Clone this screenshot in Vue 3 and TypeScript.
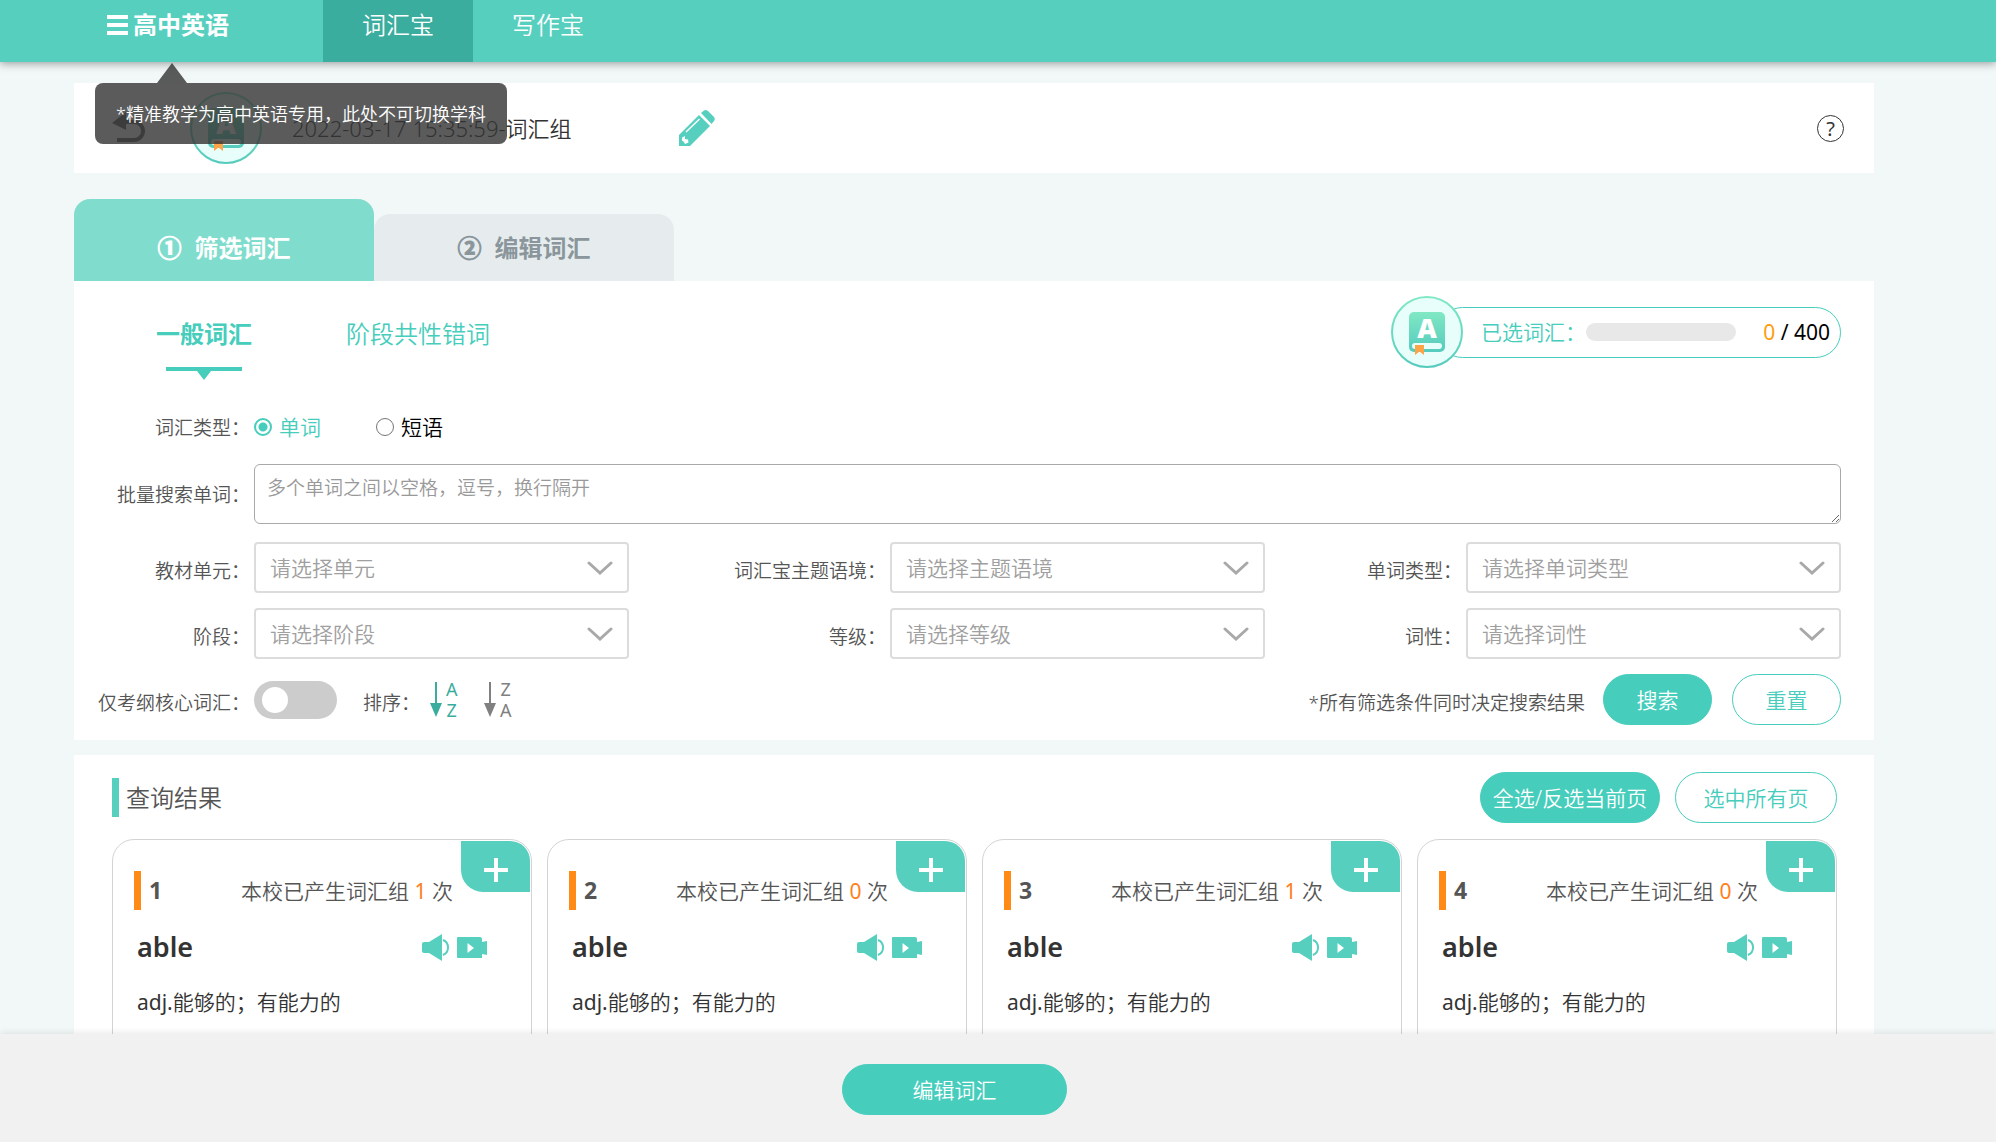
<script setup lang="ts">
import { ref } from 'vue'

interface FilterField {
  id: string
  label: string
  placeholder: string
}

interface WordCard {
  index: number
  used: number
  word: string
  pos: string
  meaning: string
}

const wordKind = ref('word')
const batch = ref('')
const coreOnly = ref(false)
const selected = ref(0)
const limit = 400

const filterRows: FilterField[][] = [
  [
    { id: 'unit', label: '教材单元：', placeholder: '请选择单元' },
    { id: 'theme', label: '词汇宝主题语境：', placeholder: '请选择主题语境' },
    { id: 'kind', label: '单词类型：', placeholder: '请选择单词类型' },
  ],
  [
    { id: 'stage', label: '阶段：', placeholder: '请选择阶段' },
    { id: 'level', label: '等级：', placeholder: '请选择等级' },
    { id: 'pos', label: '词性：', placeholder: '请选择词性' },
  ],
]

const cards: WordCard[] = [
  { index: 1, used: 1, word: 'able', pos: 'adj.', meaning: '能够的；有能力的' },
  { index: 2, used: 0, word: 'able', pos: 'adj.', meaning: '能够的；有能力的' },
  { index: 3, used: 1, word: 'able', pos: 'adj.', meaning: '能够的；有能力的' },
  { index: 4, used: 0, word: 'able', pos: 'adj.', meaning: '能够的；有能力的' },
]
</script>

<template>
  <div class="page">
    <header class="topbar">
      <button class="subject" type="button">
        <svg class="burger" viewBox="0 0 21 20" aria-hidden="true">
          <path d="M0 0h21v4H0zM0 8h21v4H0zM0 16h21v4H0z" fill="#fff" />
        </svg>
        高中英语
      </button>
      <nav class="nav">
        <a class="nav-link active" href="#words">词汇宝</a>
        <a class="nav-link" href="#writing">写作宝</a>
      </nav>
      <div class="tip" role="tooltip">*精准教学为高中英语专用，此处不可切换学科</div>
    </header>

    <main class="content">
      <section class="titlebar">
        <button class="icon-btn" type="button" aria-label="返回">
          <svg class="back" viewBox="0 0 34 32" aria-hidden="true">
            <path d="M0 11L14 0v18z" fill="#666" />
            <path d="M12 10h10a9 9 0 0 1 0 18H5" fill="none" stroke="#666" stroke-width="4" />
          </svg>
        </button>
        <svg class="badge" viewBox="0 0 72 72" aria-hidden="true">
          <defs>
            <linearGradient id="ring1" x1="0" y1="0" x2="0" y2="1">
              <stop offset="0" stop-color="#80e8c4" /><stop offset="1" stop-color="#55cbbd" />
            </linearGradient>
          </defs>
          <circle cx="36" cy="36" r="35" fill="#e8fefa" stroke="url(#ring1)" stroke-width="2" />
          <rect x="18" y="16" width="36" height="40" rx="5" fill="url(#ring1)" />
          <text x="36" y="42" class="badge-letter">A</text>
          <rect x="21" y="47" width="30" height="6" rx="3" fill="#e8fefa" />
          <path d="M24 49h9v10l-4.500-3.500L24 59z" fill="#ffa347" />
        </svg>
        <h1 class="group-name">2022-03-17 15:35:59-词汇组</h1>
        <button class="icon-btn" type="button" aria-label="重命名">
          <svg class="pencil" viewBox="0 0 36 36" aria-hidden="true">
            <path d="M0 25L20 5l11 11L11 36H0z" fill="#57cfbf" />
            <path d="M22 3l3-2.500q2-1 4 .5l6 6q1.500 2 0 4L32.500 14z" fill="#57cfbf" />
            <path d="M7 22L20.500 9" stroke="#fff" stroke-width="1.500" />
            <path d="M3 27.500l3-1.500v3l3 .5.500 3-3.500 1.500q-1-3-3-3.500z" fill="#fff" />
          </svg>
        </button>
        <button class="help" type="button" aria-label="帮助">?</button>
      </section>

      <div class="steps" role="tablist">
        <button class="step active" type="button" role="tab" aria-selected="true"><span>①</span>筛选词汇</button>
        <button class="step" type="button" role="tab" aria-selected="false"><span>②</span>编辑词汇</button>
      </div>

      <form class="panel filters" @submit.prevent>
        <div class="subhead">
          <div class="subtabs">
            <button class="subtab active" type="button">一般词汇</button>
            <button class="subtab" type="button">阶段共性错词</button>
          </div>
          <div class="counter">
            <svg class="badge" viewBox="0 0 72 72" aria-hidden="true">
              <circle cx="36" cy="36" r="35" fill="#e8fefa" stroke="url(#ring1)" stroke-width="2" />
              <rect x="18" y="16" width="36" height="40" rx="5" fill="url(#ring1)" />
              <text x="36" y="42" class="badge-letter">A</text>
              <rect x="21" y="47" width="30" height="6" rx="3" fill="#e8fefa" />
              <path d="M24 49h9v10l-4.500-3.500L24 59z" fill="#ffa347" />
            </svg>
            <div class="pill">
              <span class="pill-label">已选词汇：</span>
              <span class="track"><span class="fill" :style="{ width: (selected / limit) * 100 + '%' }"></span></span>
              <span class="amount"><b>{{ selected }}</b> / {{ limit }}</span>
            </div>
          </div>
        </div>

        <div class="line kind-line">
          <span class="label">词汇类型：</span>
          <label class="radio"><input v-model="wordKind" type="radio" name="kind" value="word" /><span>单词</span></label>
          <label class="radio"><input v-model="wordKind" type="radio" name="kind" value="phrase" /><span>短语</span></label>
        </div>

        <div class="line batch-line">
          <label class="label" for="batch">批量搜索单词：</label>
          <textarea id="batch" v-model="batch" placeholder="多个单词之间以空格，逗号，换行隔开"></textarea>
        </div>

        <div v-for="(row, r) in filterRows" :key="r" class="line select-line">
          <div v-for="field in row" :key="field.id" class="field">
            <label class="label" :for="field.id">{{ field.label }}</label>
            <div class="select">
              <select :id="field.id"><option>{{ field.placeholder }}</option></select>
              <svg class="chevron" viewBox="0 0 26 14" aria-hidden="true">
                <path d="M2 2l11 10L24 2" fill="none" stroke="#a9a9a9" stroke-width="3" stroke-linecap="round" />
              </svg>
            </div>
          </div>
        </div>

        <div class="line action-line">
          <label class="label" for="core">仅考纲核心词汇：</label>
          <input id="core" v-model="coreOnly" class="toggle" type="checkbox" />
          <span class="label sort-label">排序：</span>
          <button class="sort active" type="button" aria-label="升序">
            <svg viewBox="0 0 12 35" aria-hidden="true"><path d="M5 0h2v21h5L6 35 0 21h5z" fill="currentColor" /></svg>
            <span>A<br />Z</span>
          </button>
          <button class="sort" type="button" aria-label="降序">
            <svg viewBox="0 0 12 35" aria-hidden="true"><path d="M5 0h2v21h5L6 35 0 21h5z" fill="currentColor" /></svg>
            <span>Z<br />A</span>
          </button>
          <span class="label note">*所有筛选条件同时决定搜索结果</span>
          <button class="btn solid" type="submit">搜索</button>
          <button class="btn" type="reset">重置</button>
        </div>
      </form>

      <section class="panel results">
        <div class="results-head">
          <h2>查询结果</h2>
          <button class="btn solid wide" type="button">全选/反选当前页</button>
          <button class="btn all" type="button">选中所有页</button>
        </div>
        <div class="cards">
          <article v-for="card in cards" :key="card.index" class="card">
            <button class="add" type="button" aria-label="添加">
              <svg viewBox="0 0 24 24" aria-hidden="true"><path d="M12 0v24M0 12h24" stroke="#fff" stroke-width="4" /></svg>
            </button>
            <div class="card-top">
              <span class="num">{{ card.index }}</span>
              <span class="used">本校已产生词汇组 <em>{{ card.used }}</em> 次</span>
            </div>
            <div class="card-word">
              <h3>{{ card.word }}</h3>
              <button class="icon-btn" type="button" aria-label="发音">
                <svg class="speaker" viewBox="0 0 27 27" aria-hidden="true">
                  <path d="M2 8h5L20 0v27L7 19H2q-2 0-2-2v-7q0-2 2-2z" fill="#57cfbf" />
                  <path d="M21 6q5 2 5 7.500T21 21" fill="none" stroke="#57cfbf" stroke-width="2" />
                </svg>
              </button>
              <button class="icon-btn" type="button" aria-label="视频">
                <svg class="video" viewBox="0 0 30 21" aria-hidden="true">
                  <path d="M1 0h22q2 0 2 2v3l5-1v14l-5-1v4H1q-1 0-1-1V1q0-1 1-1z" fill="#57cfbf" />
                  <path d="M10.500 6l6.500 5-6.500 5z" fill="#fff" />
                </svg>
              </button>
            </div>
            <p class="meaning"><span class="pos">{{ card.pos }}</span>{{ card.meaning }}</p>
          </article>
        </div>
      </section>
    </main>

    <footer class="bottombar">
      <button class="btn solid edit" type="button">编辑词汇</button>
    </footer>
  </div>
</template>

<style>
body {
  margin: 0;
  background: #f2f8f8;
}
</style>

<style scoped>
* {
  box-sizing: border-box;
}

.page {
  display: flex;
  flex-direction: column;
  height: 100vh;
  font-family: "Noto Sans", "Noto Sans CJK SC", sans-serif;
  font-size: 21px;
  font-weight: 350;
  line-height: 30px;
  color: #333;
}

button,
select,
textarea {
  margin: 0;
  padding: 0;
  border: 0;
  background: none;
  color: inherit;
  font: inherit;
}

button {
  cursor: pointer;
}

svg {
  display: block;
}

h1,
h2,
h3,
p {
  margin: 0;
  font-weight: inherit;
}

.topbar {
  position: relative;
  z-index: 2;
  display: flex;
  flex: none;
  height: 62px;
  padding-left: 107px;
  background: #57cfbf;
  box-shadow: 0 2px 8px rgba(0, 0, 0, 0.35);
  color: #fff;
  font-size: 24px;
}

.subject {
  display: flex;
  align-items: center;
  gap: 5px;
  width: 216px;
  height: 50px;
  font-weight: 700;
}

.burger {
  width: 21px;
  height: 20px;
}

.nav {
  display: flex;
}

.nav-link {
  width: 150px;
  color: #fff;
  line-height: 50px;
  text-align: center;
  text-decoration: none;
}

.nav-link.active {
  background: #3aad9e;
}

.tip {
  position: absolute;
  top: 83px;
  left: 95px;
  height: 61px;
  padding: 0 21px;
  border-radius: 8px;
  background: rgba(50, 50, 50, 0.8);
  font-size: 18px;
  line-height: 62px;
}

.tip::before {
  content: "";
  position: absolute;
  bottom: 100%;
  left: 62px;
  border: 15px solid transparent;
  border-top: 0;
  border-bottom: 20px solid rgba(50, 50, 50, 0.8);
}

.content {
  flex: 1;
  min-height: 0;
  overflow-y: auto;
  padding: 21px 122px 0 74px;
  scrollbar-width: none;
}

.titlebar {
  display: flex;
  align-items: center;
  height: 90px;
  padding: 0 30px 0 38px;
  background: #fff;
}

.icon-btn {
  flex: none;
}

.back {
  width: 34px;
  height: 32px;
}

.badge {
  flex: none;
  width: 72px;
  height: 72px;
}

.titlebar .badge {
  margin: 0 30px 0 44px;
}

.badge-letter {
  fill: #fff;
  font: 900 27px "Noto Sans", sans-serif;
  text-anchor: middle;
}

.group-name {
  min-width: 387px;
  font-size: 22px;
}

.pencil {
  width: 36px;
  height: 36px;
}

.help {
  width: 27px;
  height: 27px;
  margin-left: auto;
  border: 1px solid #333;
  border-radius: 50%;
  color: #333;
  font-size: 20px;
  font-weight: 400;
  line-height: 25px;
}

.steps {
  display: flex;
  align-items: flex-end;
  margin-top: 26px;
}

.step {
  width: 300px;
  height: 67px;
  border-radius: 16px 16px 0 0;
  background: #e6ecee;
  color: #8a969b;
  font-size: 24px;
  font-weight: 700;
}

.step span {
  margin-right: 13px;
  -webkit-text-stroke: 1px currentColor;
}

.step.active {
  height: 82px;
  padding-top: 16px;
  background: #80ddcd;
  color: #fff;
}

.panel {
  background: #fff;
}

.filters {
  padding: 15px 33px 15px 16px;
}

.subhead {
  display: flex;
  justify-content: space-between;
  height: 84px;
}

.subtabs {
  display: flex;
  gap: 94px;
  padding: 20px 0 0 66px;
}

.subtab {
  display: flex;
  flex-direction: column;
  align-items: center;
  height: 64px;
  color: #46cdbc;
  font-size: 24px;
  line-height: 36px;
}

.subtab.active {
  font-weight: 700;
}

.subtab.active::after {
  content: "";
  width: 76px;
  height: 13px;
  margin-top: 15px;
  background: #46cdbc;
  clip-path: polygon(0 0, 100% 0, 100% 4px, 45px 4px, 38px 13px, 31px 4px, 0 4px);
}

.counter {
  display: flex;
  align-items: center;
  height: 72px;
}

.counter .badge {
  z-index: 1;
  margin-right: -26px;
}

.pill {
  display: flex;
  align-items: center;
  height: 51px;
  padding: 0 10px 0 43px;
  border: 1px solid #46cdbc;
  border-radius: 26px;
  color: #000;
}

.pill-label {
  color: #46cdbc;
}

.track {
  width: 150px;
  height: 18px;
  overflow: hidden;
  border-radius: 9px;
  background: #e8e8e8;
}

.fill {
  display: block;
  height: 100%;
  background: #46cdbc;
}

.amount {
  width: 94px;
  font-weight: 400;
  text-align: right;
}

.amount b {
  color: #ff9c0a;
  font-weight: 400;
}

.line {
  display: flex;
  align-items: center;
}

.label {
  flex: none;
  width: 164px;
  padding: 6px 4px 0 0;
  color: #555;
  font-size: 19px;
  text-align: right;
}

.kind-line {
  height: 30px;
  margin-top: 32px;
}

.kind-line .label,
.batch-line .label {
  padding-top: 2px;
}

.radio {
  display: flex;
  align-items: center;
  gap: 7px;
  width: 122px;
  color: #000;
}

.radio input {
  width: 18px;
  height: 18px;
  margin: 0;
  border: 1px solid #767676;
  border-radius: 50%;
  appearance: none;
}

.radio input:checked {
  border: 2px solid #46cdbc;
  background: radial-gradient(circle, #46cdbc 4px, #fff 5px);
}

.radio input:checked + span {
  color: #46cdbc;
}

.batch-line {
  margin-top: 22px;
}

textarea {
  display: block;
  flex: 1;
  height: 60px;
  padding: 8px 12px;
  border: 1px solid #a9a9a9;
  border-radius: 6px;
  background: #fff;
  font-size: 19px;
}

textarea::placeholder {
  color: #999;
}

.select-line {
  justify-content: space-between;
  margin-top: 15px;
}

.batch-line + .select-line {
  margin-top: 18px;
}

.field {
  display: flex;
  align-items: center;
}

.field:last-child .label {
  width: 104px;
}

.select {
  display: grid;
  width: 375px;
}

.select > * {
  grid-area: 1 / 1;
}

select {
  width: 100%;
  height: 51px;
  padding: 0 14px;
  border: 2px solid #dcdcdc;
  border-radius: 4px;
  background: #fff;
  color: #a0a0a0;
  appearance: none;
}

.chevron {
  width: 26px;
  height: 14px;
  margin-right: 16px;
  place-self: center end;
  pointer-events: none;
}

.action-line {
  height: 51px;
  margin-top: 15px;
}

.toggle {
  display: flex;
  align-items: center;
  width: 83px;
  height: 38px;
  margin: 0;
  padding: 0 8px;
  border-radius: 19px;
  background: #ccc;
  appearance: none;
}

.toggle::before {
  content: "";
  width: 26px;
  height: 26px;
  border-radius: 50%;
  background: #fff;
}

.toggle:checked {
  justify-content: flex-end;
  background: #46cdbc;
}

.sort-label {
  width: 93px;
  padding-left: 26px;
  text-align: left;
}

.sort {
  display: flex;
  align-items: center;
  gap: 4px;
  width: 54px;
  color: #808080;
  font-size: 18px;
  font-weight: 400;
  line-height: 21px;
}

.sort svg {
  width: 12px;
  height: 35px;
}

.sort.active {
  color: #3aad9e;
}

.note {
  width: auto;
  margin: 0 14px 0 auto;
}

.btn {
  width: 109px;
  height: 51px;
  border: 1px solid #46cdbc;
  border-radius: 26px;
  color: #46cdbc;
}

.btn + .btn {
  margin-left: 20px;
}

.btn.solid {
  background: #46cdbc;
  color: #fff;
}

.results {
  margin-top: 15px;
  padding: 17px 37px 40px 38px;
}

.results-head {
  display: flex;
  align-items: center;
}

.results-head h2 {
  margin-right: auto;
  padding-left: 7px;
  border-left: 7px solid #57cfbf;
  color: #555;
  font-size: 24px;
  line-height: 39px;
}

.btn.wide {
  width: 180px;
}

.results-head .all {
  width: 162px;
  margin-left: 15px;
}

.cards {
  display: grid;
  grid-template-columns: repeat(4, 1fr);
  gap: 15px;
  margin-top: 16px;
}

.card {
  position: relative;
  min-height: 300px;
  padding: 31px 21px 20px;
  border: 1px solid #d4d4d4;
  border-radius: 22px;
}

.add {
  position: absolute;
  top: 1px;
  right: 1px;
  display: flex;
  align-items: center;
  justify-content: center;
  width: 69px;
  height: 51px;
  padding-top: 6px;
  border-radius: 0 20px 0 22px;
  background: #57cfbf;
}

.add svg {
  width: 24px;
  height: 24px;
}

.card-top {
  display: flex;
  justify-content: space-between;
  align-items: center;
  padding-right: 57px;
}

.num {
  padding-left: 8px;
  border-left: 7px solid #ff8a15;
  color: #555;
  font-size: 23px;
  font-weight: 700;
  line-height: 39px;
}

.used {
  color: #555;
}

.used em {
  color: #ff7e1c;
  font-style: normal;
  font-weight: 400;
}

.card-word {
  display: flex;
  align-items: center;
  gap: 8px;
  margin-top: 19px;
  padding: 0 23px 0 3px;
}

.card-word h3 {
  margin-right: auto;
  font-size: 27px;
  font-weight: 600;
  line-height: 36px;
}

.speaker {
  width: 27px;
  height: 27px;
}

.video {
  width: 30px;
  height: 21px;
}

.meaning {
  margin-top: 22px;
  padding-left: 3px;
}

.pos {
  font-weight: 400;
}

.bottombar {
  z-index: 1;
  display: flex;
  flex: none;
  align-items: center;
  justify-content: center;
  height: 108px;
  padding: 3px 87px 0 0;
  background: #f1f1f1;
  box-shadow: 0 -2px 6px rgba(0, 0, 0, 0.08);
}

.btn.edit {
  width: 225px;
}
</style>
